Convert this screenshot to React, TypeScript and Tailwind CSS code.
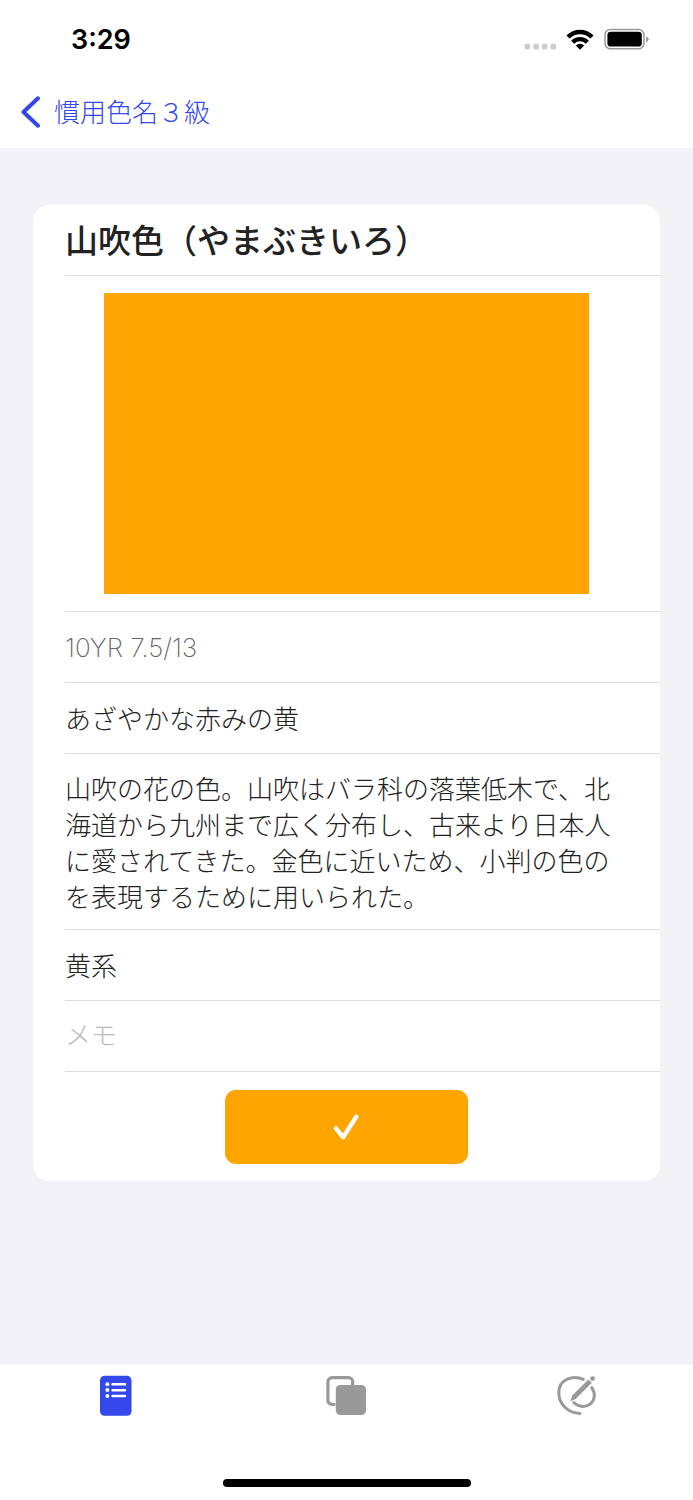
const details = [
  {
    text: "10YR 7.5/13",
    className: "h-[71px] pt-0.5 font-['Inter','Noto_Sans_CJK_JP',sans-serif] font-extralight text-[#666]",
  },
  { text: "あざやかな赤みの黄", className: "h-[71px]" },
  {
    text: "山吹の花の色。山吹はバラ科の落葉低木で、北海道から九州まで広く分布し、古来より日本人に愛されてきた。金色に近いため、小判の色のを表現するために用いられた。",
    className: "pt-4 pr-8 pb-[15px]",
  },
  { text: "黄系", className: "h-[71px]" },
];

const StatusBar = () => (
  <div className="flex h-20 items-center justify-between pr-11 pl-[71px]">
    <time className="font-['Inter',sans-serif] text-[27px] leading-8 font-semibold">3:29</time>
    <div className="flex items-center gap-2.5 pb-0.5">
      <svg className="h-7 w-8" viewBox="0 0 32 28" fill="#ccc">
        <rect x="0.6" y="18.8" width="5.6" height="5.6" rx="1.6" />
        <rect x="9.3" y="18.8" width="5.6" height="5.6" rx="1.6" />
        <rect x="17.8" y="18.8" width="5.6" height="5.6" rx="1.6" />
        <rect x="26.4" y="18.8" width="5.6" height="5.6" rx="1.6" />
      </svg>
      <svg className="h-7 w-7" viewBox="0 0 28 28" fill="none" stroke="#000" strokeWidth="4.4">
        <path d="M2 12a17 17 0 0 1 24 0" />
        <path d="M6.7 17.2a10.3 10.3 0 0 1 14.6 0" />
        <path d="M14 24.8l-4.2-4.2a5.6 5.6 0 0 1 8.4 0z" fill="#000" stroke="none" />
      </svg>
      <svg className="h-7 w-[45px]" viewBox="0 0 45 28">
        <rect x="1" y="4.4" width="39" height="19.4" rx="5.6" fill="none" stroke="#999" strokeWidth="1.5" />
        <rect x="3.4" y="6.8" width="34.4" height="14.8" rx="3.4" />
        <path d="M42.2 11.2q2.4 1 2.4 3t-2.4 3z" fill="#999" />
      </svg>
    </div>
  </div>
);

const NavBar = () => (
  <div className="flex h-[68px] items-center pb-1 pl-5">
    <button type="button" className="flex items-center gap-3 text-[26px] leading-9 font-light text-[#3347ea]">
      <svg className="h-8 w-[22px]" viewBox="0 0 22 32" fill="none" stroke="currentColor" strokeWidth="4" strokeLinecap="round" strokeLinejoin="round">
        <path d="M18 2.3L3.5 16 18 29.7" />
      </svg>
      <span className="pb-0.5">慣用色名３級</span>
    </button>
  </div>
);

const ColorCard = () => (
  <article className="mx-[33px] mt-[57px] rounded-2xl bg-white pl-8 text-[26px] leading-9 font-light text-[#222]">
    <h1 className="flex h-[71px] items-center border-b border-[#dedee0] pb-0.5 text-[33px] font-medium">
      山吹色（やまぶきいろ）
    </h1>
    <div className="flex justify-center border-b border-[#dedee0] pt-[17px] pr-8 pb-[17px]">
      <div className="h-[301px] w-[70vw] bg-[#ffa500]" />
    </div>
    {details.map((row) => (
      <div key={row.text} className={`flex items-center border-b border-[#dedee0] ${row.className}`}>
        <p>{row.text}</p>
      </div>
    ))}
    <div className="flex h-[71px] items-center border-b border-[#dedee0] pr-8 pb-1">
      <input
        type="text"
        aria-label="メモ"
        placeholder="メモ"
        className="w-full bg-transparent outline-none placeholder:text-[#bbb]"
      />
    </div>
    <div className="flex justify-center pt-[18px] pr-8 pb-[17px]">
      <button type="button" aria-label="覚えた" className="flex h-[74px] w-[35vw] items-center justify-center rounded-[11px] bg-[#ffa500]">
        <svg className="h-7 w-7" viewBox="0 0 28 28" fill="none" stroke="#fff" strokeWidth="4.4" strokeLinecap="round" strokeLinejoin="round">
          <path d="M3.9 15.4l7.2 8.8L24.3 3.8" />
        </svg>
      </button>
    </div>
  </article>
);

const TabBar = () => (
  <nav className="bg-white">
    <div className="grid h-[114px] grid-cols-3 items-start justify-items-center pt-[9px]">
      <button type="button" aria-label="リスト">
        <svg className="h-11 w-11" viewBox="0 0 44 44">
          <rect x="6" y="1.8" width="31.5" height="40" rx="4.6" fill="#3347ea" />
          <g fill="#fff">
            <circle cx="13.4" cy="10.3" r="2" />
            <circle cx="13.4" cy="16.1" r="2" />
            <circle cx="13.4" cy="22" r="2" />
            <rect x="17.4" y="9.1" width="14.8" height="2.5" rx="1.2" />
            <rect x="17.4" y="14.9" width="14.8" height="2.5" rx="1.2" />
            <rect x="17.4" y="20.8" width="14.8" height="2.5" rx="1.2" />
          </g>
        </svg>
      </button>
      <button type="button" aria-label="カード">
        <svg className="h-11 w-11" viewBox="0 0 44 44">
          <path d="M27.7 11V8a4.3 4.3 0 0 0-4.3-4.3H7.2A4.3 4.3 0 0 0 2.9 8v18.2a4.3 4.3 0 0 0 4.3 4.3h3.2" fill="none" stroke="#999" strokeWidth="3.2" />
          <rect x="10.8" y="11" width="30.2" height="30" rx="4.6" fill="#999" />
        </svg>
      </button>
      <button type="button" aria-label="テスト">
        <svg className="h-11 w-11" viewBox="0 0 44 44" fill="none" stroke="#999" strokeWidth="3" strokeLinecap="round">
          <path d="M27.2 5.4C17.4.8 2.8 4.8 2.8 18.7c0 11.6 9.4 20.4 21.2 20.7" />
          <path d="M35.8 13.6c8.6 13-6.4 25.4-18 15.1" />
          <path d="M14.4 27.2l1.8-5.6L32.4 5.4l3.4 3.4-16.2 16.2z" fill="#999" stroke="none" />
          <circle cx="36.6" cy="4.6" r="2.4" fill="#999" stroke="none" />
        </svg>
      </button>
    </div>
    <div className="flex justify-center pb-[13px]">
      <div className="h-2 w-[248px] rounded-full bg-black" />
    </div>
  </nav>
);

const App = () => {
  return (
    <div lang="ja" className="flex min-h-screen flex-col bg-[#f2f2f7] font-['Noto_Sans_CJK_JP',sans-serif] text-black">
      <header className="bg-white">
        <StatusBar />
        <NavBar />
      </header>
      <main className="flex-1 pb-8">
        <ColorCard />
      </main>
      <TabBar />
    </div>
  );
};

export default App;
